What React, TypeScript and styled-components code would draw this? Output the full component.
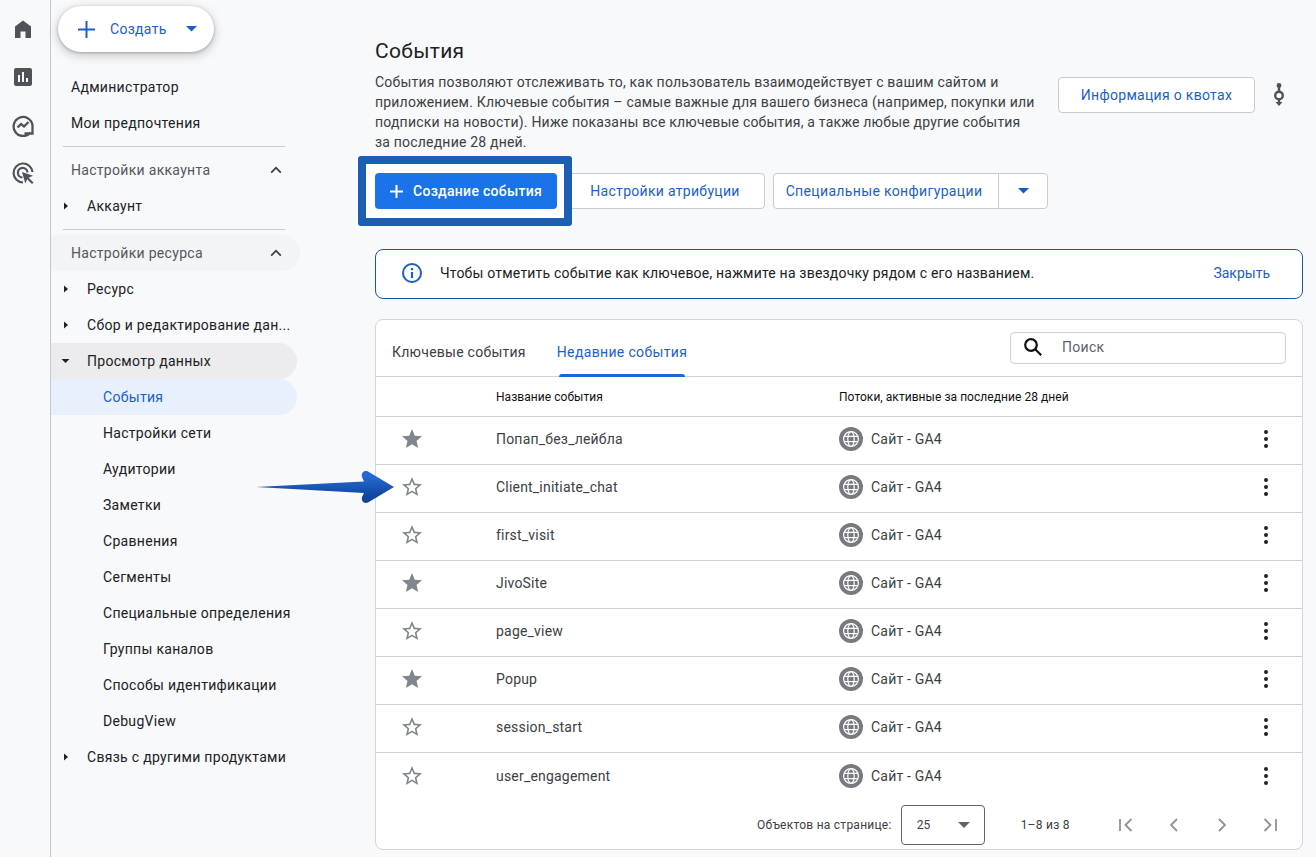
import styled, { createGlobalStyle } from "styled-components";

const GlobalStyle = createGlobalStyle`
  html, body {
    margin: 0;
    padding: 0;
    background: #f8f9fb;
    font-family: Roboto, "Liberation Sans", sans-serif;
    color: #202124;
    overflow: hidden;
  }
  * { box-sizing: border-box; }
`;

const BLUE = "#1a5fc8";

const Shell = styled.div`
  display: flex;
  height: 857px;
  width: 1316px;
  position: relative;
  overflow: hidden;
`;

const Rail = styled.nav`
  width: 51px;
  flex: none;
  border-right: 1px solid #c4c7cb;
  display: flex;
  flex-direction: column;
  align-items: center;
  padding-top: 17px;
  padding-right: 5px;
  gap: 24px;
`;

const RailIcon = styled.svg`
  width: 24px;
  height: 24px;
  display: block;
  fill: #4f5257;
`;

const Side = styled.aside`
  width: 246px;
  flex: none;
  font-size: 14px;
  letter-spacing: 0.3px;
`;

const CreateBtn = styled.button`
  margin: 6px 0 17px 7px;
  width: 156px;
  height: 46px;
  border: 0;
  border-radius: 23px;
  background: #fff;
  box-shadow: 0 1px 3px rgba(60, 64, 67, 0.35), 0 3px 8px 2px rgba(60, 64, 67, 0.2);
  display: flex;
  align-items: center;
  padding: 0 0 0 20px;
  color: ${BLUE};
  font: inherit;
  letter-spacing: 0.3px;
  span {
    margin-left: 15px;
    margin-right: 19px;
  }
`;

const Item = styled.div<{ $level?: number; $active?: boolean; $open?: boolean }>`
  height: 36px;
  display: flex;
  align-items: center;
  position: relative;
  padding-left: ${(p) => [20, 36, 52][p.$level ?? 0]}px;
  border-radius: 0 18px 18px 0;
  color: ${(p) => (p.$active ? BLUE : "#202124")};
  background: ${(p) => (p.$active ? "#e8f0fe" : p.$open ? "#ececee" : "transparent")};
  white-space: nowrap;
`;

const SectionHead = styled.div<{ $shade?: boolean }>`
  height: 36px;
  display: flex;
  align-items: center;
  justify-content: space-between;
  padding: 0 12px 0 20px;
  color: #54575c;
  border-radius: 0 18px 18px 0;
  background: ${(p) => (p.$shade ? "#f3f4f5" : "transparent")};
  width: 249px;
`;

const Rule = styled.div`
  height: 1px;
  margin: 5px 12px;
  background: #c9cbce;
`;

const Caret = styled.svg`
  position: absolute;
  left: 9px;
  top: 12px;
  width: 12px;
  height: 12px;
  fill: #202124;
`;

const Main = styled.main`
  flex: 1;
  min-width: 0;
  padding: 37px 13px 0 78px;
`;

const Header = styled.header`
  display: flex;
`;

const HeaderText = styled.div`
  width: 683px;
  flex: none;
`;

const Title = styled.h1`
  margin: 0 0 7px;
  font-size: 21px;
  line-height: 28px;
  font-weight: 400;
  letter-spacing: 0.3px;
  color: #202124;
`;

const Lead = styled.p`
  margin: 0;
  width: 662px;
  font-size: 14px;
  line-height: 20px;
  letter-spacing: 0.2px;
  color: #3c4043;
`;

const HeaderActions = styled.div`
  display: flex;
  align-items: flex-start;
  padding-top: 40px;
`;

const Outline = styled.button<{ $w: number }>`
  width: ${(p) => p.$w}px;
  height: 36px;
  background: #fff;
  border: 1px solid #c9cbce;
  border-radius: 4px;
  color: ${BLUE};
  font: 400 14px Roboto, sans-serif;
  letter-spacing: 0.3px;
  padding: 0;
  display: flex;
  align-items: center;
  justify-content: center;
`;

const HelpIcon = styled.svg`
  width: 24px;
  height: 24px;
  margin: 6px 0 0 12px;
`;

const Toolbar = styled.div`
  display: flex;
  gap: 8px;
  margin-top: 21px;
`;

const Spot = styled.div`
  position: relative;
  z-index: 1;
  &::before {
    content: "";
    position: absolute;
    inset: -17px -15px -17px -17px;
    background: #fff;
    border: 8px solid #1c5eb4;
    border-radius: 3px;
  }
`;

const Primary = styled.button`
  position: relative;
  width: 182px;
  height: 36px;
  border: 0;
  border-radius: 4px;
  background: #1a73e8;
  color: #fff;
  font: 500 14px Roboto, sans-serif;
  letter-spacing: 0.28px;
  display: flex;
  align-items: center;
  padding: 0 0 0 15px;
  gap: 10px;
`;

const Split = styled.div`
  display: flex;
  width: 275px;
  height: 36px;
  background: #fff;
  border: 1px solid #c9cbce;
  border-radius: 4px;
  color: ${BLUE};
  font-size: 14px;
  letter-spacing: 0.35px;
  div:first-child {
    width: 225px;
    display: flex;
    align-items: center;
    justify-content: center;
    padding-right: 4px;
    border-right: 1px solid #c9cbce;
  }
  div:last-child {
    flex: 1;
    display: flex;
    align-items: center;
    justify-content: center;
  }
`;

const Banner = styled.div`
  margin-top: 40px;
  height: 50px;
  background: #fff;
  border: 1px solid #1a56ab;
  border-radius: 8px;
  display: flex;
  align-items: center;
  padding: 0 32px 2px 25px;
  font-size: 14px;
  letter-spacing: 0.2px;
  color: #202124;
  svg {
    margin-right: 17px;
  }
  a {
    margin-left: auto;
    color: ${BLUE};
    letter-spacing: 0;
  }
`;

const Card = styled.section`
  margin-top: 20px;
  height: 531px;
  background: #fff;
  border: 1px solid #d3d5d8;
  border-radius: 8px;
`;

const TabBar = styled.div`
  height: 57px;
  display: flex;
  border-bottom: 1px solid #cfd1d4;
  padding-left: 16px;
  position: relative;
`;

const Tab = styled.div<{ $active?: boolean }>`
  height: 56px;
  display: flex;
  align-items: center;
  margin-right: 31px;
  padding-top: 8px;
  position: relative;
  font-size: 14px;
  letter-spacing: ${(p) => (p.$active ? 0.35 : 0.25)}px;
  color: ${(p) => (p.$active ? BLUE : "#3c4043")};
  &::after {
    content: "";
    display: ${(p) => (p.$active ? "block" : "none")};
    position: absolute;
    left: 2px;
    right: 2px;
    bottom: -1px;
    height: 3px;
    background: #1a66d2;
    border-radius: 3px 3px 0 0;
  }
`;

const Search = styled.div`
  position: absolute;
  left: 634px;
  top: 12px;
  width: 276px;
  height: 32px;
  border: 1px solid #d0d2d5;
  border-radius: 4px;
  display: flex;
  align-items: center;
  padding: 0 0 2px 11px;
  font-size: 14px;
  letter-spacing: 0.3px;
  color: #5f6368;
  gap: 18px;
`;

const Grid = styled.div`
  display: grid;
  grid-template-columns: 120px 343px 1fr 74px;
  align-items: center;
`;

const HeadRow = styled(Grid)`
  height: 40px;
  font-size: 12px;
  letter-spacing: 0.05px;
  color: #111;
  border-bottom: 1px solid #cfd1d4;
  & > div:first-child {
    grid-column: 2;
  }
`;

const Row = styled(Grid)`
  height: 48px;
  padding-bottom: 3px;
  font-size: 14px;
  letter-spacing: 0.2px;
  color: #3c4043;
  border-bottom: 1px solid #cfd1d4;
  &:last-of-type {
    height: 47px;
    border-bottom: 0;
    padding-bottom: 1px;
  }
`;

const StarCell = styled.div`
  padding-left: 24px;
  display: flex;
  svg {
    width: 24px;
    height: 24px;
    fill: #80868b;
    display: block;
  }
`;

const StreamCell = styled.div`
  display: flex;
  align-items: center;
  gap: 8px;
`;

const MenuCell = styled.div`
  display: flex;
  justify-content: center;
  padding-left: 1px;
`;

const Pager = styled.footer`
  height: 50px;
  display: flex;
  align-items: center;
  padding-left: 381px;
  font-size: 12px;
  letter-spacing: 0.25px;
  color: #3c4043;
`;

const PageSelect = styled.div`
  width: 84px;
  height: 40px;
  margin: 0 36px 0 9px;
  border: 1px solid #5f6368;
  border-radius: 4px;
  display: flex;
  align-items: center;
  justify-content: space-between;
  padding: 0 14px 0 15px;
`;

const PagerButtons = styled.div`
  display: flex;
  margin-left: 44px;
  gap: 24px;
  svg {
    display: block;
    width: 24px;
    height: 24px;
  }
`;

const Arrow = styled.svg`
  position: absolute;
  left: 254px;
  top: 468px;
  width: 144px;
  height: 40px;
`;

const EVENTS: { name: string; key: boolean }[] = [
  { name: "Попап_без_лейбла", key: true },
  { name: "Client_initiate_chat", key: false },
  { name: "first_visit", key: false },
  { name: "JivoSite", key: true },
  { name: "page_view", key: false },
  { name: "Popup", key: true },
  { name: "session_start", key: false },
  { name: "user_engagement", key: false },
];

const CHILDREN = [
  "Настройки сети",
  "Аудитории",
  "Заметки",
  "Сравнения",
  "Сегменты",
  "Специальные определения",
  "Группы каналов",
  "Способы идентификации",
  "DebugView",
];

function CaretRight() {
  return (
    <Caret viewBox="0 0 12 12">
      <path d="M4 2.500 8 6 4 9.500z" />
    </Caret>
  );
}

function CaretDown() {
  return (
    <Caret viewBox="0 0 12 12">
      <path d="M1.500 4h8L5.500 8z" />
    </Caret>
  );
}

function ChevronUp() {
  return (
    <svg width="24" height="24" viewBox="0 0 24 24" fill="#3c4043" style={{ flex: "none" }}>
      <path d="M12 8.600 6.600 14l1.200 1.200 4.200-4.200 4.200 4.200 1.200-1.200z" />
    </svg>
  );
}

function Plus({ size, color, stroke }: { size: number; color: string; stroke: number }) {
  const mid = size / 2;
  return (
    <svg width={size} height={size} viewBox={`0 0 ${size} ${size}`} style={{ flex: "none" }}>
      <path d={`M${mid} 0v${size}M0 ${mid}h${size}`} stroke={color} strokeWidth={stroke} />
    </svg>
  );
}

function SmallDown({ color, w = 12 }: { color: string; w?: number }) {
  return (
    <svg width={w} height={w / 2} viewBox="0 0 12 6" style={{ flex: "none" }}>
      <path d="M0 0h12L6 6z" fill={color} />
    </svg>
  );
}

function Star({ filled }: { filled: boolean }) {
  return (
    <svg viewBox="0 0 24 24">
      {filled ? (
        <path d="M12 17.270 18.180 21l-1.640-7.030L22 9.240l-7.190-.61L12 2 9.190 8.630 2 9.240l5.460 4.730L5.820 21z" />
      ) : (
        <path d="M22 9.240l-7.190-.62L12 2 9.190 8.630 2 9.240l5.460 4.730L5.820 21 12 17.270 18.180 21l-1.630-7.030L22 9.240zM12 15.400l-3.760 2.270 1-4.280-3.320-2.880 4.380-.38L12 6.100l1.710 4.040 4.380.38-3.320 2.880 1 4.280L12 15.400z" />
      )}
    </svg>
  );
}

function Globe() {
  return (
    <svg width="24" height="24" viewBox="0 0 24 24" style={{ flex: "none" }}>
      <circle cx="12" cy="12" r="12" fill="#777a7e" />
      <g fill="none" stroke="#fff" strokeWidth="1.200">
        <circle cx="12" cy="12" r="7.400" />
        <ellipse cx="12" cy="12" rx="3.200" ry="7.400" />
        <path d="M5 9.400h14M5 14.600h14" />
      </g>
    </svg>
  );
}

function Dots() {
  return (
    <svg width="24" height="24" viewBox="0 0 24 24" fill="#202124">
      <circle cx="12" cy="5" r="2" />
      <circle cx="12" cy="12" r="2" />
      <circle cx="12" cy="19" r="2" />
    </svg>
  );
}

function PagerIcon({ d }: { d: string }) {
  return (
    <svg viewBox="0 0 24 24">
      <path d={d} fill="none" stroke="#8f9296" strokeWidth="1.800" />
    </svg>
  );
}

export default function App() {
  return (
    <>
      <GlobalStyle />
      <Shell>
        <Rail>
          <RailIcon viewBox="0 0 24 24">
            <path d="M12 3.500 4 9.500V21h5.500v-6.500h5V21H20V9.500z" />
          </RailIcon>
          <RailIcon viewBox="0 0 24 24">
            <path d="M19 3H5c-1.100 0-2 .9-2 2v14c0 1.100.9 2 2 2h14c1.100 0 2-.9 2-2V5c0-1.100-.9-2-2-2zM9 17H7v-7h2v7zm4 0h-2V7h2v10zm4 0h-2v-4h2v4z" />
          </RailIcon>
          <RailIcon viewBox="0 0 24 24">
            <g fill="none" stroke="#4f5257" strokeWidth="2.300">
              <path d="M19.500 19.500A9.500 9.500 0 1 1 21.500 12v8.500h-8" />
              <path d="m6.500 14.500 3.500-3.500 3 2.500 4.500-4.500" />
            </g>
          </RailIcon>
          <RailIcon viewBox="0 0 24 24">
            <g fill="none" stroke="#4f5257" strokeWidth="2.200">
              <path d="M12 21.500A9.500 9.500 0 1 1 21.500 11" />
              <path d="M11.500 16.500a4.800 4.800 0 1 1 5-5" />
            </g>
            <path d="m11 11 11 3.800-4.300 1.900 4.800 4.800-1.500 1.500-4.800-4.800-1.900 4.300z" />
          </RailIcon>
        </Rail>

        <Side>
          <CreateBtn>
            <Plus size={17} color={BLUE} stroke={2} />
            <span>Создать</span>
            <SmallDown color={BLUE} w={11} />
          </CreateBtn>
          <Item>Администратор</Item>
          <Item>Мои предпочтения</Item>
          <Rule />
          <SectionHead>
            Настройки аккаунта
            <ChevronUp />
          </SectionHead>
          <Item $level={1}>
            <CaretRight />
            Аккаунт
          </Item>
          <Rule />
          <SectionHead $shade>
            Настройки ресурса
            <ChevronUp />
          </SectionHead>
          <Item $level={1}>
            <CaretRight />
            Ресурс
          </Item>
          <Item $level={1}>
            <CaretRight />
            Сбор и редактирование дан...
          </Item>
          <Item $level={1} $open>
            <CaretDown />
            Просмотр данных
          </Item>
          <Item $level={2} $active>
            События
          </Item>
          {CHILDREN.map((c) => (
            <Item key={c} $level={2}>
              {c}
            </Item>
          ))}
          <Item $level={1}>
            <CaretRight />
            Связь с другими продуктами
          </Item>
        </Side>

        <Main>
          <Header>
            <HeaderText>
              <Title>События</Title>
              <Lead>
                События позволяют отслеживать то, как пользователь взаимодействует с вашим сайтом и
                приложением. Ключевые события – самые важные для вашего бизнеса (например, покупки или
                подписки на новости). Ниже показаны все ключевые события, а также любые другие события
                за последние 28 дней.
              </Lead>
            </HeaderText>
            <HeaderActions>
              <Outline $w={197}>Информация о квотах</Outline>
              <HelpIcon viewBox="0 0 24 24">
                <g fill="none" stroke="#4f5257" strokeWidth="2.400">
                  <circle cx="12" cy="12.500" r="3.800" />
                  <path d="M12 3v5.500M12 16v5" />
                </g>
                <circle cx="12" cy="2.500" r="2.400" fill="#4f5257" />
                <path d="M8.500 19h7L12 23z" fill="#4f5257" />
              </HelpIcon>
            </HeaderActions>
          </Header>

          <Toolbar>
            <Spot>
              <Primary>
                <Plus size={13} color="#fff" stroke={2} />
                Создание события
              </Primary>
            </Spot>
            <Outline $w={200}>Настройки атрибуции</Outline>
            <Split>
              <div>Специальные конфигурации</div>
              <div>
                <SmallDown color="#1a56c8" w={11} />
              </div>
            </Split>
          </Toolbar>

          <Banner>
            <svg width="22" height="22" viewBox="0 0 22 22">
              <circle cx="11" cy="11" r="9" fill="none" stroke={BLUE} strokeWidth="2" />
              <path d="M11 10v6M11 6v2.200" stroke={BLUE} strokeWidth="2.200" />
            </svg>
            Чтобы отметить событие как ключевое, нажмите на звездочку рядом с его названием.
            <a>Закрыть</a>
          </Banner>

          <Card>
            <TabBar>
              <Tab>Ключевые события</Tab>
              <Tab $active>Недавние события</Tab>
              <Search>
                <svg width="22" height="22" viewBox="0 0 22 22" fill="none" stroke="#111" strokeWidth="2.200">
                  <circle cx="9" cy="9" r="5.800" />
                  <path d="m13.200 13.200 6 6" />
                </svg>
                Поиск
              </Search>
            </TabBar>
            <HeadRow>
              <div>Название события</div>
              <div>Потоки, активные за последние 28 дней</div>
            </HeadRow>
            {EVENTS.map((e) => (
              <Row key={e.name}>
                <StarCell>
                  <Star filled={e.key} />
                </StarCell>
                <div>{e.name}</div>
                <StreamCell>
                  <Globe />
                  Сайт - GA4
                </StreamCell>
                <MenuCell>
                  <Dots />
                </MenuCell>
              </Row>
            ))}
            <Pager>
              Объектов на странице:
              <PageSelect>
                25
                <SmallDown color="#5f6368" w={12} />
              </PageSelect>
              1–8 из 8
              <PagerButtons>
                <PagerIcon d="M6 6v12M17.500 6l-6 6 6 6" />
                <PagerIcon d="M15 6l-6 6 6 6" />
                <PagerIcon d="M9 6l6 6-6 6" />
                <PagerIcon d="M18 6v12M6.500 6l6 6-6 6" />
              </PagerButtons>
            </Pager>
          </Card>
        </Main>

        <Arrow viewBox="0 0 144 40">
          <defs>
            <linearGradient id="arrowFill" x1="0" y1="0" x2="0" y2="1">
              <stop offset="0.2" stopColor="#2467d0" />
              <stop offset="0.8" stopColor="#0f459c" />
            </linearGradient>
          </defs>
          <path
            d="M2 19 110 13.500 108 9C107 5 110 2 114 3.500L140 19 114 34.500C110 36 107 33 108 29L110 25Z"
            fill="url(#arrowFill)"
          />
        </Arrow>
      </Shell>
    </>
  );
}
